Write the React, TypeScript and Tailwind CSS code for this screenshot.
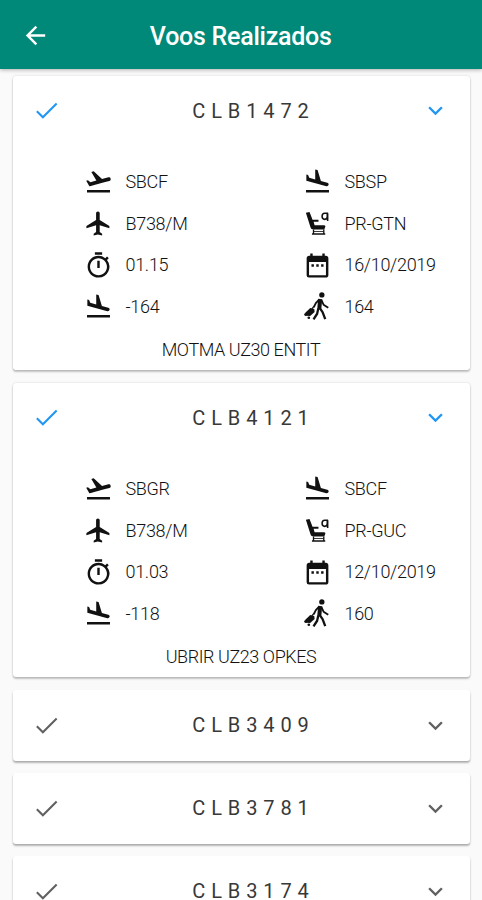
import type { ReactNode } from "react";

type Flight = {
  code: string;
  from?: string;
  to?: string;
  aircraft?: string;
  registration?: string;
  duration?: string;
  date?: string;
  balance?: string;
  passengers?: string;
  route?: string;
};

const flights: Flight[] = [
  { code: "CLB1472", from: "SBCF", to: "SBSP", aircraft: "B738/M", registration: "PR-GTN", duration: "01.15", date: "16/10/2019", balance: "-164", passengers: "164", route: "MOTMA UZ30 ENTIT" },
  { code: "CLB4121", from: "SBGR", to: "SBCF", aircraft: "B738/M", registration: "PR-GUC", duration: "01.03", date: "12/10/2019", balance: "-118", passengers: "160", route: "UBRIR UZ23 OPKES" },
  { code: "CLB3409" },
  { code: "CLB3781" },
  { code: "CLB3174" },
];

function Icon({ children }: { children: ReactNode }) {
  return (
    <svg viewBox="0 0 24 24" className="size-[29px] shrink-0 overflow-visible" fill="currentColor">
      {children}
    </svg>
  );
}

const takeoff = <path d="M2.5 19h19v2h-19v-2zm19.57-9.36c-.21-.8-1.04-1.28-1.84-1.06L14.92 10l-6.9-6.43-1.93.51 4.14 7.17-4.97 1.33-1.97-1.54-1.45.39 2.59 4.49s7.12-1.9 16.57-4.43c.81-.23 1.28-1.05 1.07-1.85z" />;
const landing = <path d="M2.5 19h19v2h-19v-2zm16.84-3.15c.8.21 1.62-.26 1.84-1.06.21-.8-.26-1.62-1.06-1.84l-5.31-1.42-2.76-9.02L10.12 2v8.28L5.15 8.95l-.93-2.32-1.45-.39v5.17l16.57 4.44z" />;
const plane = <path d="M21 16v-2l-8-5V3.5c0-.83-.67-1.5-1.5-1.5S10 2.67 10 3.5V9l-8 5v2l8-2.5V19l-2 1.5V22l3.5-1 3.5 1v-1.5L13 19v-5.5l8 2.5z" />;
const timer = <path d="M15 1H9v2h6V1zm-4 13h2V8h-2v6zm8.03-6.61 1.42-1.42c-.43-.51-.9-.99-1.41-1.41l-1.42 1.42A8.962 8.962 0 0 0 12 4c-4.97 0-9 4.03-9 9s4.02 9 9 9a8.994 8.994 0 0 0 7.03-14.61zM12 20c-3.87 0-7-3.13-7-7s3.13-7 7-7 7 3.13 7 7-3.13 7-7 7z" />;
const calendar = <path d="M9 11H7v2h2v-2zm4 0h-2v2h2v-2zm4 0h-2v2h2v-2zm2-7h-1V2h-2v2H8V2H6v2H5c-1.11 0-1.99.9-1.99 2L3 20a2 2 0 0 0 2 2h14c1.1 0 2-.9 2-2V6c0-1.1-.9-2-2-2zm0 16H5V9h14v11z" />;
const seat = (
  <>
    <path d="M2.4 3.2 5.4 2.4 7.9 8.8H12.8V10.6H8.8L9.6 13.4H17.4C18.4 13.4 18.7 14.2 18.4 14.9L17.6 17H8.8C7.4 17 6.6 16.4 6.2 15.2Z" />
    <path d="M8.7 17v4M17.2 17v4M7.4 20.7H18.4" fill="none" stroke="currentColor" strokeWidth="1.1" />
    <path d="M9 18.6H17" fill="none" stroke="currentColor" strokeWidth="0.7" />
    <path d="M17.9 8.6c-1.4 0-2.1-.9-2.1-2.5S16.6 3.5 18 3.5h2.1v3c0 1.300-.7 2.100-2.200 2.100M20.400 3.500V10" fill="none" stroke="currentColor" strokeWidth="1.3" />
  </>
);
const traveller = (
  <>
    <circle cx="15.600" cy="2.400" r="2.200" />
    <path d="M13.300 12.500 16.200 16.600 18.400 22.500M12.700 13.500 11.700 18 8.700 22.600" fill="none" stroke="currentColor" strokeWidth="1.900" strokeLinejoin="round" />
    <path d="M13.300 6.300 10.600 9.200 8.900 12.600M15.200 6.500 17 10.500 20.900 13.100" fill="none" stroke="currentColor" strokeWidth="1.500" strokeLinejoin="round" />
    <path d="m12.500 5.500 3.400.5-.7 7.700-3.300-.5z" />
    <path d="m1.700 17.300 4.300-4 3.300.8.300 2.400-3.700 3.400-3.400-.3z" />
    <path d="m7.300 14 1.700-2" stroke="currentColor" strokeWidth="1" />
    <circle cx="2.200" cy="18.700" r="1.200" />
    <circle cx="4.800" cy="21.300" r="1.100" />
  </>
);

function Detail({ icon, text, right = false }: { icon: ReactNode; text?: string; right?: boolean }) {
  return (
    <div className={right ? "flex w-[153px] items-center gap-[13px]" : "flex w-[219px] items-center gap-[13px]"}>
      <Icon>{icon}</Icon>
      <span className="text-[18px] leading-none font-light tracking-[-0.3px] whitespace-nowrap">{text}</span>
    </div>
  );
}

function FlightCard({ flight }: { flight: Flight }) {
  const open = flight.route !== undefined;
  return (
    <article className={open ? "mb-[13px] h-[294px] shrink-0 rounded-[3px] bg-white shadow-[0_2px_2px_rgba(0,0,0,0.22),0_0_2px_rgba(0,0,0,0.18)]" : "mb-[12.5px] h-[70.5px] shrink-0 rounded-[3px] bg-white shadow-[0_2px_2px_rgba(0,0,0,0.25),0_1px_2px_rgba(0,0,0,0.1)]"}>
      <div className={open ? "flex h-[69px] items-center justify-between pr-[19px] pl-[19px] text-[#2196f3]" : "flex h-[70.5px] items-center justify-between pr-[19px] pl-[19px] text-[#616161]"}>
        <Icon><path d="M9 16.4 4.6 12l-1.2 1.2L9 18.8 21 6.800l-1.200-1.200z" /></Icon>
        <h2 className="pl-[25px] text-[20px] leading-none tracking-[5.9px] text-[#383838]">{flight.code}</h2>
        <Icon><path d="M16.59 8.59 12 13.17 7.41 8.59 6 10l6 6 6-6z" /></Icon>
      </div>
      {open && (
        <div className="pt-[16px] pl-[71px] text-[#111111]">
          <div className="grid grid-cols-[219px_153px] auto-rows-[41.7px] items-center">
            <Detail icon={takeoff} text={flight.from} />
            <Detail icon={landing} text={flight.to} right />
            <Detail icon={plane} text={flight.aircraft} />
            <Detail icon={seat} text={flight.registration} right />
            <Detail icon={timer} text={flight.duration} />
            <Detail icon={calendar} text={flight.date} right />
            <Detail icon={landing} text={flight.balance} />
            <Detail icon={traveller} text={flight.passengers} right />
          </div>
          <p className="-ml-[71px] pt-[13px] text-center text-[18px] leading-none font-light tracking-[-0.43px]">{flight.route}</p>
        </div>
      )}
    </article>
  );
}

export default function App() {
  return (
    <div className="flex h-[900px] w-full flex-col overflow-hidden bg-[#fafafa] font-['Roboto',sans-serif]">
      <header className="relative z-10 flex h-[69px] shrink-0 items-center bg-[#008978] pt-px pr-[50px] pl-[20.5px] text-white shadow-[0_1px_4px_rgba(0,0,0,0.3)]">
        <Icon><path d="M20 11H7.83l5.59-5.59L12 4l-8 8 8 8 1.41-1.41L7.83 13H20v-2z" /></Icon>
        <h1 className="flex-1 pt-[3px] text-center text-[25px] leading-none font-medium tracking-[-0.25px]">Voos Realizados</h1>
      </header>
      <main className="flex flex-col px-[12.5px] pt-[7px]">
        {flights.map((flight) => <FlightCard key={flight.code} flight={flight} />)}
      </main>
    </div>
  );
}
